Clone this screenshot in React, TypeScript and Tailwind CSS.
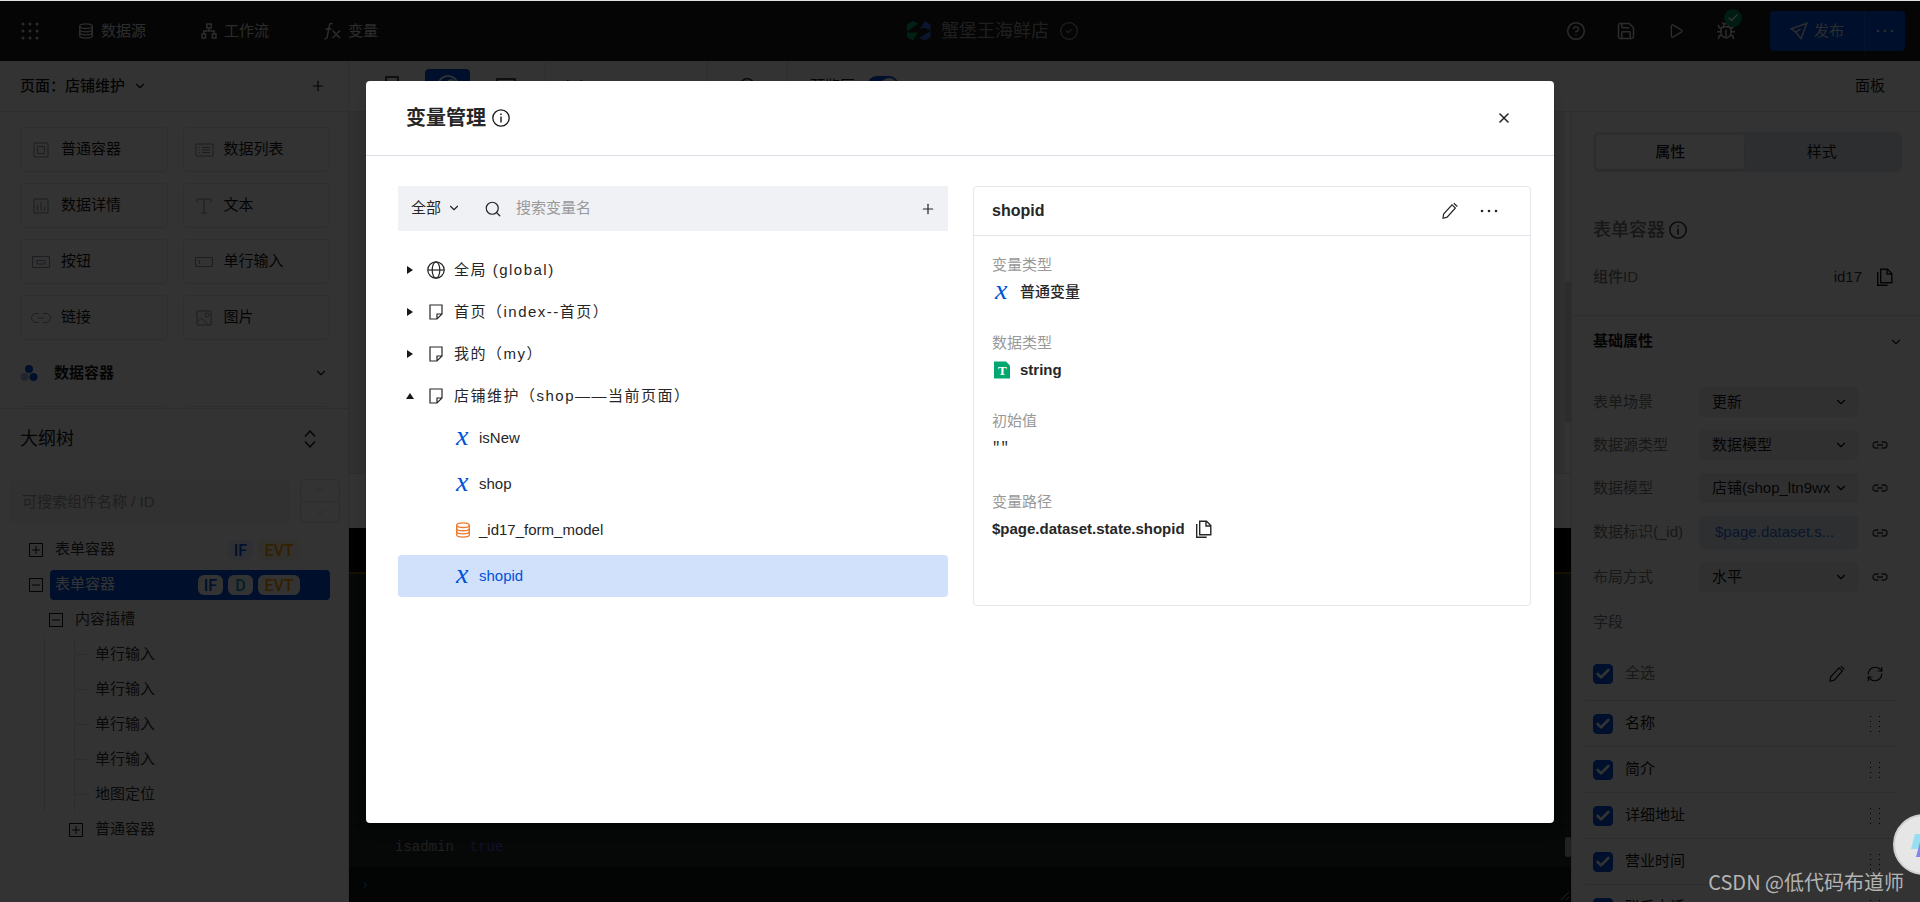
import { ReactNode, useState } from "react";
import {
  Bug,
  Check,
  ChevronDown,
  ChevronUp,
  CircleCheck,
  CircleHelp,
  Play,
  Plus,
  RefreshCw,
  Save,
  Search,
  X,
} from "lucide-react";

type IconProps = { className?: string };

function Svg({
  className = "size-4",
  box = "0 0 16 16",
  children,
}: IconProps & { box?: string; children: ReactNode }) {
  return (
    <svg
      viewBox={box}
      className={`shrink-0 overflow-visible ${className}`}
      fill="none"
      stroke="currentColor"
      aria-hidden="true"
    >
      {children}
    </svg>
  );
}

/* ---------- icons ---------- */

const GridDots = () => (
  <Svg className="size-[18px]" box="0 0 18 18">
    <g fill="currentColor" stroke="none">
      {[2, 9, 16].map((y) =>
        [2, 9, 16].map((x) => <circle key={`${x}-${y}`} cx={x} cy={y} r="1.5" />),
      )}
    </g>
  </Svg>
);

const MoreDots = () => (
  <Svg className="size-[18px]" box="0 0 18 18">
    <g fill="currentColor" stroke="none">
      <circle cx="2" cy="9" r="1.3" />
      <circle cx="9" cy="9" r="1.3" />
      <circle cx="16" cy="9" r="1.3" />
    </g>
  </Svg>
);

const DatabaseIcon = ({ className = "size-4" }: IconProps) => (
  <Svg className={className}>
    <g strokeWidth="1.4">
      <ellipse cx="8" cy="3.2" rx="6.3" ry="2.3" />
      <path d="M1.7 3.2v9.6c0 1.3 2.8 2.3 6.3 2.3s6.3-1 6.3-2.3V3.2" />
      <path d="M1.7 6.4c0 1.3 2.8 2.3 6.3 2.3s6.3-1 6.3-2.3M1.7 9.6c0 1.3 2.8 2.3 6.3 2.3s6.3-1 6.3-2.3" />
    </g>
  </Svg>
);

const FlowIcon = () => (
  <Svg className="size-4">
    <path
      strokeWidth="1.5"
      d="M5.8 1h4.4v4H5.8zM1 11h3.6v4H1zM11.4 11H15v4h-3.6zM8 5v3M2.8 11V8h10.4v3"
    />
  </Svg>
);

const FxIcon = () => (
  <Svg className="h-[18px] w-[17px]" box="0 0 17 18">
    <path
      strokeWidth="1.5"
      d="M8.5 1.8C6.4.8 5.6 1.8 5.3 3.6L3.3 14.5C3 16.4 2 17.2.5 16.5M1.5 7h6M8.5 8.5l7.5 7.5M16 8.5L8.5 16"
    />
  </Svg>
);

const SendIcon = () => (
  <Svg className="size-[18px]" box="0 0 18 18">
    <path strokeWidth="1.5" d="M16.8 1.2L1.2 6.8l4.6 3.4 5.2 6.4zM5.8 10.2L10.5 7" />
  </Svg>
);

const InfoIcon = ({ className = "size-[18px]" }: IconProps) => (
  <Svg className={className} box="0 0 18 18">
    <circle cx="9" cy="9" r="8.2" strokeWidth="1.3" />
    <path strokeWidth="1.4" d="M9 7.5v6M9 4.5V6" />
  </Svg>
);

const PencilIcon = () => (
  <Svg className="size-[18px]" box="0 0 18 18">
    <path
      strokeWidth="1.2"
      d="M2 16.300l.6-4.200L11 2.800l3.400 3.200-8.300 9.200zM12.800 1.200l3.500 3.300"
    />
  </Svg>
);

const CopyIcon = () => (
  <Svg className="size-[18px]" box="0 0 18 18">
    <path strokeWidth="1.4" d="M4.7 1.2h6.8l4.3 4.3v9.2H4.7zM11 1.5V6h4.5" />
    <path strokeWidth="1.4" d="M1.7 4v13.2h10" />
  </Svg>
);

const GlobeIcon = () => (
  <Svg className="size-[18px]" box="0 0 18 18">
    <g strokeWidth="1.2">
      <circle cx="9" cy="9" r="8.2" />
      <ellipse cx="9" cy="9" rx="3.8" ry="8.2" />
      <path d="M.8 9h16.4" />
    </g>
  </Svg>
);

const PageIcon = () => (
  <Svg className="size-4">
    <path strokeWidth="1.2" d="M2 1h12v9l-5 5H2zM14 10H9v5" />
  </Svg>
);

const LinkIcon = () => (
  <Svg className="h-2 w-4" box="0 0 16 8">
    <path
      strokeWidth="1.3"
      d="M6.5 1H4a3 3 0 0 0 0 6h2.500M9.500 1H12a3 3 0 0 1 0 6H9.500M5 4h6"
    />
  </Svg>
);

const VariableIcon = () => (
  <Svg className="size-4">
    <text
      x="1"
      y="15"
      fill="#0052d9"
      stroke="none"
      className="font-['Liberation_Serif',serif] text-[28px] italic"
    >
      x
    </text>
  </Svg>
);

const StringIcon = () => (
  <Svg className="h-[18px] w-4" box="0 0 16 18">
    <path d="M0 .5h12l4 4v13H0z" fill="#00a870" stroke="none" />
    <text
      x="4"
      y="14"
      fill="#fff"
      stroke="none"
      className="font-['Liberation_Serif',serif] text-[13px] font-bold"
    >
      T
    </text>
  </Svg>
);

const BrandIcon = () => (
  <svg viewBox="0 0 24 20" className="h-5 w-6" aria-hidden="true">
    <path d="M6 0l5 2.500-10 7.500H0V3.500zM0 11c3 1 7 1 11 0L6 19.500 0 16z" fill="#07a568" />
    <path d="M18 0l5.500 3.500V10c-3-3-7-4-11-2zM23.500 10v6L18 19.500 12 17z" fill="#2f6fe0" />
  </svg>
);

const Caret = ({ open }: { open?: boolean }) => (
  <svg viewBox="0 0 8 8" className="size-2 shrink-0" aria-hidden="true">
    <path d={open ? "M4 1l4 6H0z" : "M1 0l6 4-6 4z"} fill="#181818" />
  </svg>
);

const DragDots = () => (
  <svg viewBox="0 0 18 18" className="size-[18px]" aria-hidden="true">
    {[1, 6, 11, 16].map((y) => (
      <path key={y} d={`M4 ${y}h1v1H4zM13 ${y}h1v1h-1z`} fill="#000" />
    ))}
  </svg>
);

/* ---------- data ---------- */

const widgets: { name: string; icon: ReactNode }[] = [
  { name: "普通容器", icon: <path d="M1 1h14v14H1zM4.5 4.5h7v7h-7z" /> },
  { name: "数据列表", icon: <path d="M0 2h17v12H0zM3 5.5h1M6 5.5h8M3 8h1M6 8h8M3 10.5h1M6 10.5h8" /> },
  { name: "数据详情", icon: <path d="M1 1h14v14H1zM4.5 7v5.5M8 4v8.5M11.5 9v3.5" /> },
  { name: "文本", icon: <path d="M1 4V1h14v3M8 1v14M5 15h6" /> },
  { name: "按钮", icon: <path d="M-.5 2.5h17v11h-17zM4 6.5h8V10H4z" /> },
  { name: "单行输入", icon: <path d="M-.5 3.5h17v9h-17zM3.5 6v4" /> },
  { name: "链接", icon: <path d="M6 3.5H3a4.500 4.500 0 0 0 0 9h3M10 3.500h3a4.500 4.500 0 0 1 0 9h-3M4.500 8h7" /> },
  {
    name: "图片",
    icon: (
      <>
        <path d="M1 1h14v14H1zM1 12l4.5-4 7 7" />
        <circle cx="11" cy="5" r="2" />
      </>
    ),
  },
];

const scopes = [
  { name: "全局 (global)", global: true },
  { name: "首页（index--首页）" },
  { name: "我的（my）" },
  { name: "店铺维护（shop——当前页面）", open: true },
];

const variables = [
  { name: "isNew" },
  { name: "shop" },
  { name: "_id17_form_model", model: true },
  { name: "shopid" },
];

const formProps = [
  { label: "表单场景", value: "更新" },
  { label: "数据源类型", value: "数据模型", link: true },
  { label: "数据模型", value: "店铺(shop_ltn9wxk)", link: true },
  { label: "数据标识(_id)", value: "$page.dataset.s...", link: true, expression: true },
  { label: "布局方式", value: "水平", link: true },
];

const fields = ["名称", "简介", "详细地址", "营业时间", "联系电话"];

/* ---------- small parts ---------- */

function Tag({ kind, solid }: { kind: "IF" | "D" | "EVT"; solid?: boolean }) {
  const tone = {
    IF: "w-[25px] text-[#0052d9]",
    D: "w-[25px] text-[#00a0c8]",
    EVT: "w-[42px] text-[#ffa000]",
  }[kind];
  const bg = solid ? "bg-white" : kind === "EVT" ? "bg-[#fff3e6]" : "bg-[#e9effc]";
  return (
    <span
      className={`flex h-5 items-center justify-center rounded-md pt-0.5 font-[Roboto,sans-serif] text-base font-medium ${tone} ${bg}`}
    >
      {kind}
    </span>
  );
}

function Toggle({ open }: { open?: boolean }) {
  return (
    <button
      type="button"
      aria-label={open ? "收起" : "展开"}
      className="grid size-[14px] shrink-0 place-items-center border border-[#181818] text-[#181818]"
    >
      <Svg className="size-2" box="0 0 8 8">
        <path d={open ? "M0 4h8" : "M0 4h8M4 0v8"} />
      </Svg>
    </button>
  );
}

function CheckRow({ label, all, children }: { label: string; all?: boolean; children?: ReactNode }) {
  const [on, setOn] = useState(true);
  return (
    <div
      className={`flex shrink-0 items-center border-b border-[#dfe2e8] pr-3 pl-[7px] ${all ? "h-[54px] text-[#777]" : "h-[46px] text-[#181818]"}`}
    >
      <label className="flex flex-1 items-center gap-3">
        <span className="relative size-5">
          <input
            type="checkbox"
            checked={on}
            onChange={() => setOn(!on)}
            className="block size-5 appearance-none rounded border border-[#0052d9] checked:bg-[#0052d9]"
          />
          {on && (
            <Check className="pointer-events-none absolute inset-0 size-5 p-0.5 text-white" strokeWidth={4} />
          )}
        </span>
        {label}
      </label>
      {children}
    </div>
  );
}

/* ---------- page ---------- */

function TopBar() {
  return (
    <header className="flex h-[60px] shrink-0 items-center bg-[#1a1a1a] text-[#dcdcdc]">
      <div className="flex flex-1 items-center pl-[21px]">
        <GridDots />
        <nav className="ml-[39px] flex items-center gap-[55px]">
          <a href="#data" className="flex items-center gap-[7px]">
            <DatabaseIcon />
            数据源
          </a>
          <a href="#flow" className="flex items-center gap-[7px]">
            <FlowIcon />
            工作流
          </a>
          <a href="#vars" className="flex items-center gap-[7px]">
            <FxIcon />
            变量
          </a>
        </nav>
      </div>
      <div className="ml-[60px] flex items-center gap-2.5 text-[#9b9b9b]">
        <BrandIcon />
        <span className="text-lg">蟹堡王海鲜店</span>
        <CircleCheck className="size-5" strokeWidth={1.5} />
      </div>
      <div className="flex flex-1 items-center justify-end gap-[30px] pr-[15px]">
        <CircleHelp className="size-5" strokeWidth={1.8} />
        <Save className="size-5" strokeWidth={1.8} />
        <Play className="size-5 p-0.5" strokeWidth={2} />
        <span className="relative">
          <Bug className="size-5" strokeWidth={1.8} />
          <span className="absolute -top-[19px] left-2 -mt-px grid size-[18px] translate-y-2 place-items-center rounded-full bg-[#078d5c] text-white">
            <Check className="size-3" strokeWidth={2.5} />
          </span>
        </span>
        <div className="ml-1 flex h-10 overflow-hidden rounded bg-[#0052d9]">
          <button type="button" className="flex w-[95px] items-center justify-center gap-1.5 border-r border-[#1f66dd]">
            <SendIcon />
            发布
          </button>
          <button type="button" aria-label="更多" className="grid w-10 place-items-center">
            <MoreDots />
          </button>
        </div>
      </div>
    </header>
  );
}

function LeftPanel() {
  return (
    <aside className="flex w-[349px] shrink-0 flex-col border-r border-[#e3e6eb] bg-white text-[#181818]">
      <div className="flex h-[51px] shrink-0 items-center border-b border-[#e3e6eb] pr-[22px] pl-5">
        <button type="button" className="flex flex-1 items-center gap-2 font-medium">
          页面：店铺维护
          <ChevronDown className="size-3.5" />
        </button>
        <button type="button" aria-label="新建页面">
          <Plus className="size-4" strokeWidth={1.8} />
        </button>
      </div>

      <div className="h-[297px] shrink-0 overflow-hidden border-b border-[#dcdfe5] pt-[15px] pr-[18px] pl-5">
        <div className="grid grid-cols-2 gap-x-[15px] gap-y-[11px]">
          {widgets.map((w) => (
            <button
              key={w.name}
              type="button"
              className="flex h-[45px] items-center gap-3 rounded border border-[#e3e6eb] pl-3"
            >
              <span className="text-[#8a93a3]">
                <Svg>{w.icon}</Svg>
              </span>
              {w.name}
            </button>
          ))}
        </div>
        <div className="flex h-[66px] items-center gap-4 pr-0.5">
          <Svg className="size-[18px]" box="0 0 18 18">
            <g stroke="none">
              <circle cx="9" cy="5" r="4" fill="#0052d9" />
              <circle cx="4.5" cy="13" r="4" fill="#a9bbdd" />
              <circle cx="13.5" cy="13" r="4" fill="#0052d9" />
            </g>
          </Svg>
          <span className="flex-1 font-bold">数据容器</span>
          <ChevronDown className="size-3.5" />
        </div>
        <div className="grid grid-cols-2 gap-x-[15px]">
          <div className="h-[45px] rounded border border-[#e3e6eb]" />
          <div className="h-[45px] rounded border border-[#e3e6eb]" />
        </div>
      </div>

      <div className="flex h-[60px] shrink-0 items-center justify-between pr-7 pl-5 text-lg">
        <h2>大纲树</h2>
        <Svg className="size-5" box="0 0 20 20">
          <path strokeWidth="1.5" d="M5 7.5l5-5.500 5 5.500M5 12.500l5 5.500 5-5.500" />
        </Svg>
      </div>

      <div className="flex shrink-0 gap-2.5 pt-2.5 pr-2 pl-2.5">
        <input
          aria-label="搜索组件"
          placeholder="可搜索组件名称 / ID"
          className="h-11 min-w-0 flex-1 rounded bg-[#f3f4f6] px-3 placeholder:text-[#9a9a9a]"
        />
        <div className="flex h-11 w-10 flex-col divide-y divide-[#dcdfe5] rounded-sm border border-[#dcdfe5] text-[#c4c8cf]">
          <button type="button" aria-label="上一个" className="grid flex-1 place-items-center">
            <ChevronUp className="size-3" />
          </button>
          <button type="button" aria-label="下一个" className="grid flex-1 place-items-center">
            <ChevronDown className="size-3" />
          </button>
        </div>
      </div>

      <div className="mt-[9px] text-[#333]">
        <div className="flex h-[35px] items-center gap-3 pr-12 pl-[29px]">
          <Toggle />
          <span className="flex-1">表单容器</span>
          <span className="flex gap-[5px]">
            <Tag kind="IF" />
            <Tag kind="EVT" />
          </span>
        </div>
        <div className="flex h-[35px] items-center gap-[7px] pr-[18px] pl-[29px]">
          <Toggle open />
          <div className="flex h-[30px] flex-1 items-center rounded-sm bg-[#0052d9] pr-[30px] pl-[5px] text-white">
            <span className="flex-1">表单容器</span>
            <span className="flex gap-[5px]">
              <Tag kind="IF" solid />
              <Tag kind="D" solid />
              <Tag kind="EVT" solid />
            </span>
          </div>
        </div>
        <div className="flex h-[35px] items-center gap-3 pl-[49px]">
          <Toggle open />
          内容插槽
        </div>
        <div className="ml-11 border-l border-[#dcdfe5] pl-[29px]">
          <ul className="border-l border-[#dcdfe5]">
            {["单行输入", "单行输入", "单行输入", "单行输入", "地图定位"].map((name, i) => (
              <li key={i} className="flex h-[35px] items-center gap-1.5">
                <span className="h-px w-[14px] bg-[#dcdfe5]" />
                {name}
              </li>
            ))}
          </ul>
        </div>
        <div className="flex h-[35px] items-center gap-3 pl-[69px]">
          <Toggle />
          普通容器
        </div>
      </div>
    </aside>
  );
}

function CanvasArea() {
  return (
    <main className="flex min-w-0 flex-1 flex-col">
      <div className="h-[362px] shrink-0 border-b border-[#dcdfe5] bg-[#f0f1f5]">
        <div className="ml-auto h-full w-1.5 bg-white pt-[169px]">
          <div className="h-[142px] rounded-full bg-[#dcdcdc]" />
        </div>
      </div>
      <div className="h-[54px] shrink-0 bg-white" />
      <div className="h-[46px] shrink-0 border-b-2 border-[#6b5310] bg-[#080808]" />
      <div className="flex min-h-0 flex-1 flex-col bg-[#202826] font-['Liberation_Mono',monospace] text-sm">
        {[0, 1, 2, 3, 4, 5].map((n) => (
          <div key={n} className="h-[42px] shrink-0 border-b border-[#161c1a]" />
        ))}
        <div className="flex flex-1 items-center gap-4 pl-[46px]">
          <span className="text-[#9aa09e]">isadmin</span>
          <span className="text-[#5b4fc0]">true</span>
          <span className="ml-auto h-5 w-1.5 rounded-full bg-[#aaa]" />
        </div>
        <div className="flex h-[35px] items-center justify-between bg-[#0f1715] pl-3 text-[#2f7fc0]">
          ›
          <Svg className="size-3 self-end text-[#aaa]" box="0 0 12 12">
            <path d="M2 10l8-8M7 10l3-3" />
          </Svg>
        </div>
      </div>
    </main>
  );
}

function CanvasToolbar() {
  return (
    <div className="flex h-[51px] shrink-0 items-center border-b border-[#e3e6eb] bg-white text-[#181818]">
      <div className="flex h-full w-[197px] items-center gap-[26px] border-r border-[#e3e6eb] pl-9">
        <Svg className="h-5 w-[14px]" box="0 0 14 20">
          <path strokeWidth="1.5" d="M1 1h12v18H1z" />
        </Svg>
        <button
          type="button"
          aria-label="小程序"
          className="grid h-[34px] w-[45px] place-items-center rounded bg-[#0052d9] text-white"
        >
          <Svg className="size-[22px]" box="0 0 22 22">
            <circle cx="11" cy="11" r="10" strokeWidth="1.6" />
            <path strokeWidth="1.6" d="M11 14a3 3 0 1 1-3-3M11 14V8a3 3 0 1 1 3 3" />
          </Svg>
        </button>
        <Svg className="h-4 w-5" box="0 0 20 16">
          <path strokeWidth="1.5" d="M1 1h18v12H1zM6 15h8" />
        </Svg>
      </div>
      <div className="flex h-full w-[162px] items-center border-r border-[#e3e6eb] pl-5">iPhone 8 100%</div>
      <div className="flex h-full w-20 items-center justify-center border-r border-[#e3e6eb]">
        <Search className="size-5" strokeWidth={1.5} />
      </div>
      <label className="flex items-center gap-3 pl-[22px]">
        预览区
        <span className="flex h-5 w-8 justify-end rounded-full bg-[#0052d9] p-0.5">
          <input type="checkbox" defaultChecked className="size-4 appearance-none rounded-full bg-white" />
        </span>
      </label>
      <button type="button" className="mr-[35px] ml-auto">
        面板
      </button>
    </div>
  );
}

function PropsPanel() {
  return (
    <aside className="flex w-[349px] shrink-0 flex-col overflow-hidden border-l border-[#e3e6eb] bg-white">
      <div className="pt-5 pr-[18px] pl-[21px]">
        <div className="grid h-10 grid-cols-[148fr_154fr] rounded-md bg-[#e2e6ec] p-[3px] text-[#181818]">
          <button type="button" className="rounded bg-white font-medium shadow-sm">
            属性
          </button>
          <button type="button">样式</button>
        </div>
        <h2 className="mt-11 flex h-7 items-center gap-1 text-lg font-medium text-[#777]">
          表单容器
          <InfoIcon className="size-[18px] text-[#181818]" />
        </h2>
        <div className="mt-[19px] flex h-7 items-center pr-2 font-medium text-[#777]">
          <span className="flex-1">组件ID</span>
          <span className="font-normal text-[#333]">id17</span>
          <button type="button" aria-label="复制" className="ml-3.5 text-[#181818]">
            <CopyIcon />
          </button>
        </div>
      </div>

      <div className="mt-6 border-t border-[#e3e6eb] pr-[17px] pl-[21px]">
        <div className="flex h-[51px] items-center justify-between font-bold text-[#181818]">
          基础属性
          <ChevronDown className="size-3.5" />
        </div>
        <div className="mt-5 flex flex-col gap-[13px]">
          {formProps.map((p) => (
            <div key={p.label} className="flex items-center">
              <label htmlFor={p.label} className="w-[106px] text-[#777]">
                {p.label}
              </label>
              {p.expression ? (
                <button
                  id={p.label}
                  type="button"
                  className="h-[33px] w-[159px] rounded bg-[#e4eaf6] pl-4 text-left text-[#2f6fe0]"
                >
                  {p.value}
                </button>
              ) : (
                <span className="relative w-[159px]">
                  <select
                    id={p.label}
                    className="block h-[30px] w-full appearance-none rounded bg-[#f0f1f5] pr-7 pl-[13px] text-[#181818]"
                  >
                    <option>{p.value}</option>
                  </select>
                  <ChevronDown className="pointer-events-none absolute top-2 right-2.5 size-3.5" />
                </span>
              )}
              {p.link && (
                <button type="button" aria-label="绑定" className="ml-3.5 text-[#333]">
                  <LinkIcon />
                </button>
              )}
            </div>
          ))}
          <div className="flex h-[30px] items-center pt-1 text-[#777]">字段</div>
        </div>
      </div>

      <div className="mt-3 mr-6 ml-[14px] flex flex-col">
        <CheckRow label="全选" all>
          <span className="flex gap-5 text-[#181818]">
            <PencilIcon />
            <RefreshCw className="size-[18px]" strokeWidth={1.6} />
          </span>
        </CheckRow>
        {fields.map((f) => (
          <CheckRow key={f} label={f}>
            <DragDots />
          </CheckRow>
        ))}
      </div>
    </aside>
  );
}

function DetailItem({ label, tall, children }: { label: string; tall?: boolean; children: ReactNode }) {
  return (
    <div className={tall ? "h-[81px]" : "h-[78px]"}>
      <dt className="h-[26px] leading-[26px] text-[#999]">{label}</dt>
      <dd className="flex h-7 items-center gap-2.5 font-medium text-[#262626]">{children}</dd>
    </div>
  );
}

function VariableDialog() {
  const [current, setCurrent] = useState("shopid");
  return (
    <section
      role="dialog"
      aria-label="变量管理"
      className="mx-8 flex h-[calc(100vh-160px)] w-full max-w-[1188px] flex-col rounded bg-white text-[#262626] shadow-lg"
    >
      <header className="flex h-[75px] shrink-0 items-center border-b border-[#dcdce4] pr-[42px] pl-10">
        <h1 className="text-xl font-bold">变量管理</h1>
        <InfoIcon className="ml-1.5 size-[18px] text-[#181818]" />
        <button type="button" aria-label="关闭" className="ml-auto">
          <X className="size-4" strokeWidth={2.4} />
        </button>
      </header>

      <div className="grid grid-cols-[550fr_558fr] items-start gap-[25px] pt-[30px] pr-[23px] pl-8">
        <div>
          <div className="flex h-[45px] items-center bg-[#f0f1f5] px-3">
            <span className="relative w-[51px]">
              <select aria-label="范围" className="block w-full appearance-none pl-px">
                <option>全部</option>
              </select>
              <ChevronDown className="pointer-events-none absolute top-1 right-0 size-3.5" />
            </span>
            <Search className="ml-[23px] size-[18px]" strokeWidth={1.6} />
            <input
              aria-label="搜索变量名"
              placeholder="搜索变量名"
              className="ml-3.5 min-w-0 flex-1 placeholder:text-[#999]"
            />
            <button type="button" aria-label="新建变量">
              <Plus className="size-4" strokeWidth={1.8} />
            </button>
          </div>

          <ul className="pt-[18px] tracking-widest">
            {scopes.map((s) => (
              <li key={s.name} className="flex h-[42px] items-center pl-2">
                <Caret open={s.open} />
                <span className="ml-3 grid w-5 place-items-center">
                  {s.global ? <GlobeIcon /> : <PageIcon />}
                </span>
                <span className="ml-2">{s.name}</span>
              </li>
            ))}
          </ul>
          <ul className="flex flex-col gap-1">
            {variables.map((v) => (
              <li key={v.name}>
                <button
                  type="button"
                  onClick={() => setCurrent(v.name)}
                  className={`flex h-[42px] w-full items-center gap-2 rounded pl-[57px] ${
                    v.name === current ? "bg-[#d2e1fb] text-[#0052d9]" : ""
                  }`}
                >
                  {v.model ? <DatabaseIcon className="size-4 text-[#ed7b2f]" /> : <VariableIcon />}
                  {v.name}
                </button>
              </li>
            ))}
          </ul>
        </div>

        <div className="min-h-[420px] rounded border border-[#e3e6eb]">
          <div className="flex h-[49px] items-center border-b border-[#e3e6eb] pr-8 pl-[18px]">
            <h2 className="flex-1 text-base font-bold">{current}</h2>
            <button type="button" aria-label="编辑" className="mr-[21px]">
              <PencilIcon />
            </button>
            <button type="button" aria-label="更多">
              <MoreDots />
            </button>
          </div>
          <dl className="pt-4 pl-[18px]">
            <DetailItem label="变量类型">
              <span className="flex w-[18px] justify-end">
                <VariableIcon />
              </span>
              普通变量
            </DetailItem>
            <DetailItem label="数据类型">
              <span className="flex w-[18px] justify-end">
                <StringIcon />
              </span>
              <span className="font-bold">string</span>
            </DetailItem>
            <DetailItem label="初始值" tall>
              <span className="font-['Liberation_Mono',monospace] text-sm">""</span>
            </DetailItem>
            <DetailItem label="变量路径">
              <span className="font-bold">$page.dataset.state.{current}</span>
              <button type="button" aria-label="复制路径">
                <CopyIcon />
              </button>
            </DetailItem>
          </dl>
        </div>
      </div>
    </section>
  );
}

export default function App() {
  return (
    <div className="flex h-screen flex-col overflow-hidden bg-white font-['Liberation_Sans','Noto_Sans_CJK_SC',sans-serif] text-[15px]">
      <div className="h-px shrink-0 bg-[#dfe3e1]" />
      <div className="relative flex min-h-0 flex-1 flex-col">
        <TopBar />
        <div className="flex min-h-0 flex-1 overflow-hidden">
          <LeftPanel />
          <div className="flex min-w-0 flex-1 flex-col">
            <CanvasToolbar />
            <div className="flex min-h-0 flex-1">
              <CanvasArea />
              <PropsPanel />
            </div>
          </div>
        </div>

        <div className="absolute inset-0 flex items-start justify-center bg-black/80 pt-20">
          <VariableDialog />
        </div>

        <button
          type="button"
          aria-label="助手"
          className="absolute -right-[34px] bottom-[27px] size-[61px] rounded-full border-2 border-[#cfcfcf] bg-[#e6e6e6] pl-4"
        >
          <Svg className="size-6" box="0 0 24 24">
            <g stroke="none">
              <path d="M4 1h14l-4 15H0z" fill="#96dff2" />
              <path d="M9 9h14l-4 15H5z" fill="#7f86ee" />
            </g>
          </Svg>
        </button>
        <div className="absolute right-4 bottom-1.5 font-['Noto_Sans_CJK_SC',sans-serif] text-xl text-[#b4b4b4]">
          CSDN @低代码布道师
        </div>
      </div>
    </div>
  );
}
